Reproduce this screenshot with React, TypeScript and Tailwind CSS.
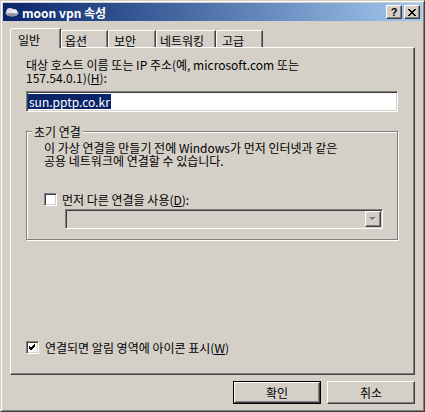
const raised =
  "border border-t-white border-l-white border-r-[#404040] border-b-[#404040] shadow-[inset_-1px_-1px_#808080]";
const sunken =
  "border border-t-[#808080] border-l-[#808080] border-r-white border-b-white shadow-[inset_1px_1px_#404040,inset_-1px_-1px_#d4d0c8]";

const tabs = [
  { label: "옵션", cls: "w-[47px] pl-[3px]" },
  { label: "보안", cls: "w-[48px] pl-[5px]" },
  { label: "네트워킹", cls: "w-[60px] pl-[3px]" },
  { label: "고급", cls: "w-[47px] pl-[5px]" },
];

const CheckBox = ({ checked }: { checked?: boolean }) => (
  <span className={`w-[13px] h-[13px] shrink-0 bg-white flex items-center justify-center ${sunken}`}>
    {checked && (
      <svg width="7" height="7" viewBox="0 0 7 7">
        <path d="M0 2 L2 4 L6 0 M0 3 L2 5 L6 1 M0 4 L2 6 L6 2" stroke="#000" strokeWidth="1" fill="none" shapeRendering="crispEdges" />
      </svg>
    )}
  </span>
);

const CaptionButton = ({ children }: { children: React.ReactNode }) => (
  <div className={`w-[16px] h-[14px] bg-[#d4d0c8] flex items-center justify-center ${raised}`}>{children}</div>
);

const Button = ({ label, isDefault }: { label: string; isDefault?: boolean }) =>
  isDefault ? (
    <div className="w-[88px] h-[23px] border border-black">
      <div className={`w-full h-full bg-[#d4d0c8] flex items-center justify-center ${raised}`}>{label}</div>
    </div>
  ) : (
    <div className={`w-[88px] h-[23px] bg-[#d4d0c8] flex items-center justify-center ${raised}`}>{label}</div>
  );

export default function App() {
  return (
    <div className="w-[425px] h-[412px] bg-[#d4d0c8] border border-t-[#d4d0c8] border-l-[#d4d0c8] border-r-[#404040] border-b-[#404040] shadow-[inset_1px_1px_#fff,inset_-1px_-1px_#808080] p-[2px] flex flex-col font-['Noto_Sans_CJK_KR','Liberation_Sans',sans-serif] text-[12px] leading-[13px] text-black">
      {/* title bar */}
      <div className="h-[18px] flex items-center bg-linear-to-r from-[#0a246a] to-[#a6caf0] pl-[2px] pr-[2px]">
        <svg width="14" height="10" viewBox="0 0 14 10">
          <ellipse cx="7" cy="6" rx="6.5" ry="3.5" fill="#b8b8c0" />
          <ellipse cx="5" cy="4" rx="3.5" ry="3" fill="#dcdce4" />
          <ellipse cx="9" cy="4.5" rx="3" ry="2.5" fill="#ececf2" />
          <ellipse cx="7" cy="7.5" rx="5" ry="1.5" fill="#9090a0" />
        </svg>
        <span className="ml-[3px] text-white font-bold text-[12px]">moon vpn 속성</span>
        <div className="ml-auto flex gap-[2px]">
          <CaptionButton>
            <span className="font-['Liberation_Sans',sans-serif] font-bold text-[11px] leading-[11px]">?</span>
          </CaptionButton>
          <CaptionButton>
            <svg width="8" height="7" viewBox="0 0 8 7">
              <path d="M0 0 L7 7 M1 0 L8 7 M7 0 L0 7 M8 0 L1 7" stroke="#000" strokeWidth="1" shapeRendering="crispEdges" />
            </svg>
          </CaptionButton>
        </div>
      </div>

      {/* body */}
      <div className="flex-1 flex flex-col px-[7px] pt-[7px] pb-[5px]">
        {/* tabs */}
        <div className="flex items-end h-[20px] -mb-px relative z-10">
          <div className="w-[51px] h-[20px] bg-[#d4d0c8] border-t border-l border-t-white border-l-white border-r border-r-[#404040] shadow-[inset_-1px_0_#808080] rounded-tl-[2px] pl-[7px] pt-[4px]">
            일반
          </div>
          {tabs.map((t) => (
            <div
              key={t.label}
              className={`h-[17px] mb-px border-t border-l border-t-white border-l-white border-r border-r-[#404040] shadow-[inset_-1px_0_#808080] rounded-tl-[2px] pt-[3px] ${t.cls}`}
            >
              {t.label}
            </div>
          ))}
        </div>

        {/* panel */}
        <div className={`flex-1 flex flex-col pl-[15px] pr-[16px] pt-[10px] pb-[20px] ${raised}`}>
          <p>
            대상 호스트 이름 또는 IP 주소(예, microsoft.com 또는
            <br />
            157.54.0.1)(<span className="underline">H</span>):
          </p>
          <div className={`mt-[7px] h-[21px] bg-white flex items-center pl-px ${sunken}`}>
            <span className="bg-[#0a246a] text-white leading-[15px] px-px">sun.pptp.co.kr</span>
          </div>

          <fieldset className="mt-[13px] border border-[#808080] shadow-[inset_1px_1px_#fff,1px_1px_#fff]">
            <legend className="ml-[5px] px-[2px] bg-[#d4d0c8] leading-[13px]">초기 연결</legend>
            <div className="pl-[17px] pr-[14px] pt-[3px] pb-[10px] flex flex-col">
              <p>
                이 가상 연결을 만들기 전에 Windows가 먼저 인터넷과 같은
                <br />
                공용 네트워크에 연결할 수 있습니다.
              </p>
              <div className="mt-[26px] flex items-center gap-[5px]">
                <CheckBox />
                <span>
                  먼저 다른 연결을 사용(<span className="underline">D</span>):
                </span>
              </div>
              <div className={`mt-[3px] ml-[21px] h-[20px] bg-[#d4d0c8] flex justify-end items-center pr-px ${sunken}`}>
                <div className={`w-[16px] h-[16px] bg-[#d4d0c8] flex items-center justify-center ${raised}`}>
                  <svg width="8" height="5" viewBox="0 0 8 5">
                    <path d="M1 1 L4 4 L7 1 Z" fill="#fff" />
                    <path d="M0 0 L7 0 L3.5 3.5 Z" fill="#808080" />
                  </svg>
                </div>
              </div>
            </div>
          </fieldset>

          <div className="mt-auto flex items-center gap-[6px]">
            <CheckBox checked />
            <span>
              연결되면 알림 영역에 아이콘 표시(<span className="underline">W</span>)
            </span>
          </div>
        </div>

        {/* buttons */}
        <div className="mt-[6px] flex justify-end gap-[6px]">
          <Button label="확인" isDefault />
          <Button label="취소" />
        </div>
      </div>
    </div>
  );
}
